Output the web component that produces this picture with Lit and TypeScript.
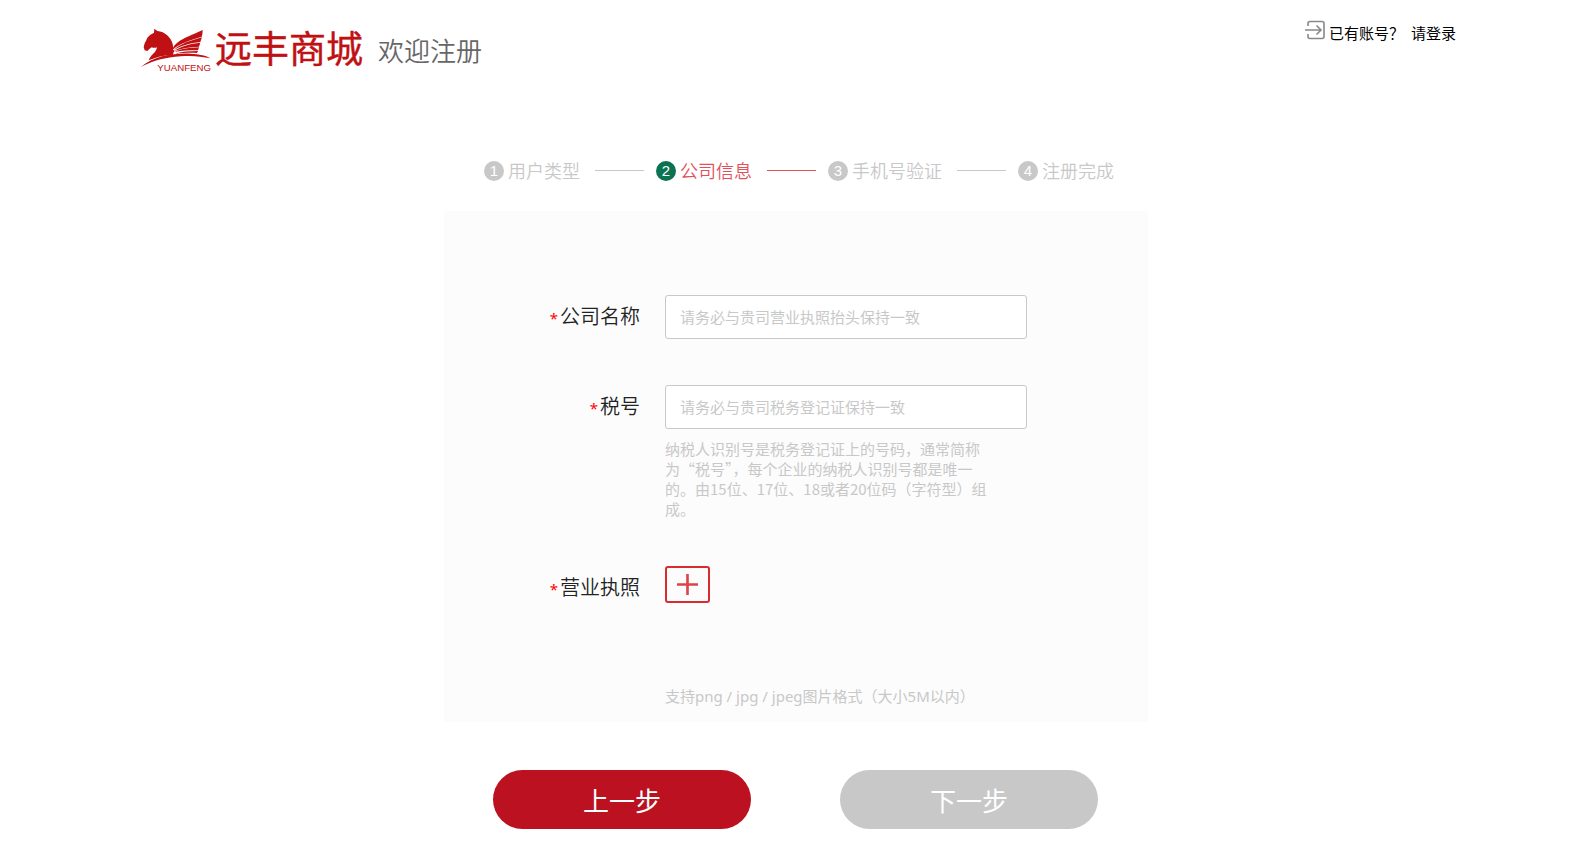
import { LitElement, html, css } from "lit";
import { customElement, state } from "lit/decorators.js";
import { classMap } from "lit/directives/class-map.js";

const STEPS = ["用户类型", "公司信息", "手机号验证", "注册完成"];

@customElement("brand-logo")
class BrandLogo extends LitElement {
  static styles = css`
    :host {
      display: flex;
      align-items: flex-start;
      gap: 4px;
      color: #bf1014;
    }
    .mark {
      display: block;
      width: 70px;
      height: 44px;
      overflow: visible;
    }
    .mark-text {
      font-family: "Liberation Sans", sans-serif;
      font-size: 29px;
    }
    .name {
      font-size: 37px;
      font-weight: 400;
      line-height: 38px;
      -webkit-text-stroke: 0.4px currentColor;
    }
  `;

  render() {
    return html`
      <svg class="mark" viewBox="18 18 210 132" fill="currentColor" aria-hidden="true">
        <path d="M58 20 L67 27 C90 29 108 46 113 66 Q115 75 114 83 L119 86 Q114 92 114 99 C88 98 66 105 41 115 C45 104 52 98 59 91 Q65 84 66 76 Q58 79 50 76 L44 80 L37 87 L29 85 L26 75 L29 64 Q33 57 37 47 Q45 37 57 32 Z" />
        <path d="M113 83 C118 57 158 45 203 24 Q203 37 200 44 C168 54 137 62 113 83 Z" />
        <path d="M116 85 C136 64 167 56 201 46 L196 60 C166 64 139 69 116 85 Z" />
        <path d="M118 87 C139 71 165 66 196 62 L192 74 C164 75 141 78 118 87 Z" />
        <path d="M119 90 C139 80 163 77 192 76 L189 85 C163 85 141 86 119 90 Z" />
        <path d="M118 95 C139 89 162 87 189 87 L186 93 C163 92 143 93 118 95 Z" />
        <path d="M18 135 C56 101 118 93 166 95 C194 96 213 101 227 109 C199 103 169 100 137 103 C92 106 53 116 18 135 Z" />
        <text class="mark-text" x="67" y="146">YUANFENG</text>
      </svg>
      <span class="name">远丰商城</span>
    `;
  }
}

@customElement("step-bar")
class StepBar extends LitElement {
  @state() current = 1;

  static styles = css`
    .steps {
      display: flex;
      align-items: center;
      list-style: none;
      margin: 0;
      padding: 0 0 0 40px;
    }
    .step {
      display: flex;
      align-items: center;
      height: 24px;
      color: #c8c8c8;
      font-size: 18px;
      font-weight: 350;
      line-height: 24px;
      white-space: nowrap;
    }
    .name {
      padding-bottom: 2px;
    }
    .number {
      width: 20px;
      height: 20px;
      margin-right: 4px;
      border-radius: 50%;
      background: #c8c8c8;
      color: #fff;
      font-family: "Liberation Sans", sans-serif;
      font-size: 15px;
      font-weight: 400;
      line-height: 20px;
      text-align: center;
    }
    .line {
      width: 49px;
      height: 1px;
      margin: 0 12px 2px 15px;
      background: #c8c8c8;
    }
    .active {
      color: #e2505c;
    }
    .active .number {
      background: #0b7352;
    }
    .active .line {
      background: #e2505c;
    }
  `;

  render() {
    return html`
      <ol class="steps">
        ${STEPS.map(
          (name, i) => html`
            <li class=${classMap({ step: true, active: i === this.current })}>
              <span class="number">${i + 1}</span><span class="name">${name}</span>
              ${i < STEPS.length - 1 ? html`<span class="line"></span>` : null}
            </li>
          `
        )}
      </ol>
    `;
  }
}

@customElement("app-root")
class AppRoot extends LitElement {
  static styles = css`
    :host {
      display: block;
      background: #fff;
      color: #222;
      font-family: "Noto Sans CJK SC", sans-serif;
    }
    .header {
      display: flex;
      justify-content: space-between;
      align-items: flex-start;
      padding: 20px 116px 0 141px;
    }
    .brand {
      display: flex;
      align-items: center;
      gap: 15px;
      padding-top: 8px;
    }
    .title {
      margin: 0;
      color: #666;
      font-size: 26px;
      font-weight: 350;
      line-height: 44px;
    }
    .login {
      display: flex;
      align-items: center;
      gap: 4px;
      color: #000;
      font-size: 15px;
      line-height: 26px;
    }
    .login-icon {
      width: 20px;
      height: 20px;
      align-self: flex-start;
    }
    .login-link {
      margin-left: 3px;
      color: inherit;
      text-decoration: none;
    }
    .main {
      max-width: 704px;
      margin: 0 auto;
      padding: 87px 0 36px 20px;
    }
    .panel {
      display: grid;
      grid-template-columns: 196px 362px;
      column-gap: 25px;
      row-gap: 46px;
      margin-top: 28px;
      padding: 84px 0 15px;
      background: #fcfcfc;
    }
    .label {
      font-size: 20px;
      font-weight: 350;
      line-height: 42px;
      text-align: right;
    }
    .required {
      color: #f00;
      font-family: "Noto Sans", sans-serif;
      font-size: 15px;
      font-weight: 400;
      margin-right: 2px;
    }
    .input {
      display: block;
      box-sizing: border-box;
      width: 100%;
      height: 44px;
      padding: 0 14px 2px;
      border: 1px solid #c8c8c8;
      border-radius: 3px;
      background: #fff;
      color: #222;
      font-family: inherit;
      font-size: 15px;
    }
    .input::placeholder {
      color: #c8c8c8;
      font-weight: 400;
    }
    .hint {
      max-width: 328px;
      margin: 10px 0 0;
      padding-bottom: 1px;
      color: #c8c8c8;
      font-size: 15px;
      line-height: 20px;
    }
    .formats {
      max-width: none;
      margin-top: 83px;
      font-family: "Noto Sans", "Noto Sans CJK SC", sans-serif;
    }
    .upload {
      display: flex;
      align-items: center;
      justify-content: center;
      width: 45px;
      height: 37px;
      padding: 0 0 1px;
      border: 2px solid #da2c2f;
      border-radius: 3px;
      background: #fcfcfc;
      color: #dc4246;
    }
    .actions {
      display: flex;
      gap: 89px;
      padding: 48px 0 0 49px;
    }
    .action {
      width: 258px;
      height: 59px;
      padding: 0;
      border: 0;
      border-radius: 30px;
      background: #bb1121;
      color: #fff;
      font-family: inherit;
      font-size: 26px;
      line-height: 58px;
    }
    .action:disabled {
      background: #c8c8c8;
    }
  `;

  render() {
    return html`
      <header class="header">
        <div class="brand">
          <brand-logo></brand-logo>
          <h1 class="title">欢迎注册</h1>
        </div>
        <div class="login">
          <svg class="login-icon" viewBox="0 0 20 20" fill="none" stroke="#888" stroke-width="1.6" aria-hidden="true">
            <path d="M3 6V3.5Q3 1.5 5 1.5H17Q19 1.5 19 3.5V16.5Q19 18.5 17 18.5H5Q3 18.5 3 16.5V14M0 10H15M11.5 5.5L16 10L11.5 14.5" />
          </svg>
          <span>已有账号？</span>
          <a class="login-link" href="#login">请登录</a>
        </div>
      </header>
      <main class="main">
        <step-bar></step-bar>
        <form class="form">
          <div class="panel">
            <label class="label" for="company"><span class="required">*</span>公司名称</label>
            <div>
              <input class="input" id="company" type="text" placeholder="请务必与贵司营业执照抬头保持一致" />
            </div>
            <label class="label" for="tax"><span class="required">*</span>税号</label>
            <div>
              <input class="input" id="tax" type="text" placeholder="请务必与贵司税务登记证保持一致" />
              <p class="hint" lang="zh-CN">纳税人识别号是税务登记证上的号码，通常简称为“税号”，每个企业的纳税人识别号都是唯一的。由15位、17位、18或者20位码（字符型）组成。</p>
            </div>
            <label class="label" for="license"><span class="required">*</span>营业执照</label>
            <div>
              <button class="upload" id="license" type="button">
                <svg width="21" height="21" viewBox="0 0 21 21" stroke="currentColor" stroke-width="2.6" aria-hidden="true">
                  <path d="M10.5 0V21M0 10.5H21" />
                </svg>
              </button>
              <p class="hint formats" lang="zh-CN">支持png / jpg / jpeg图片格式（大小5M以内）</p>
            </div>
          </div>
          <div class="actions">
            <button class="action" type="button">上一步</button>
            <button class="action" type="submit" disabled>下一步</button>
          </div>
        </form>
      </main>
    `;
  }
}
